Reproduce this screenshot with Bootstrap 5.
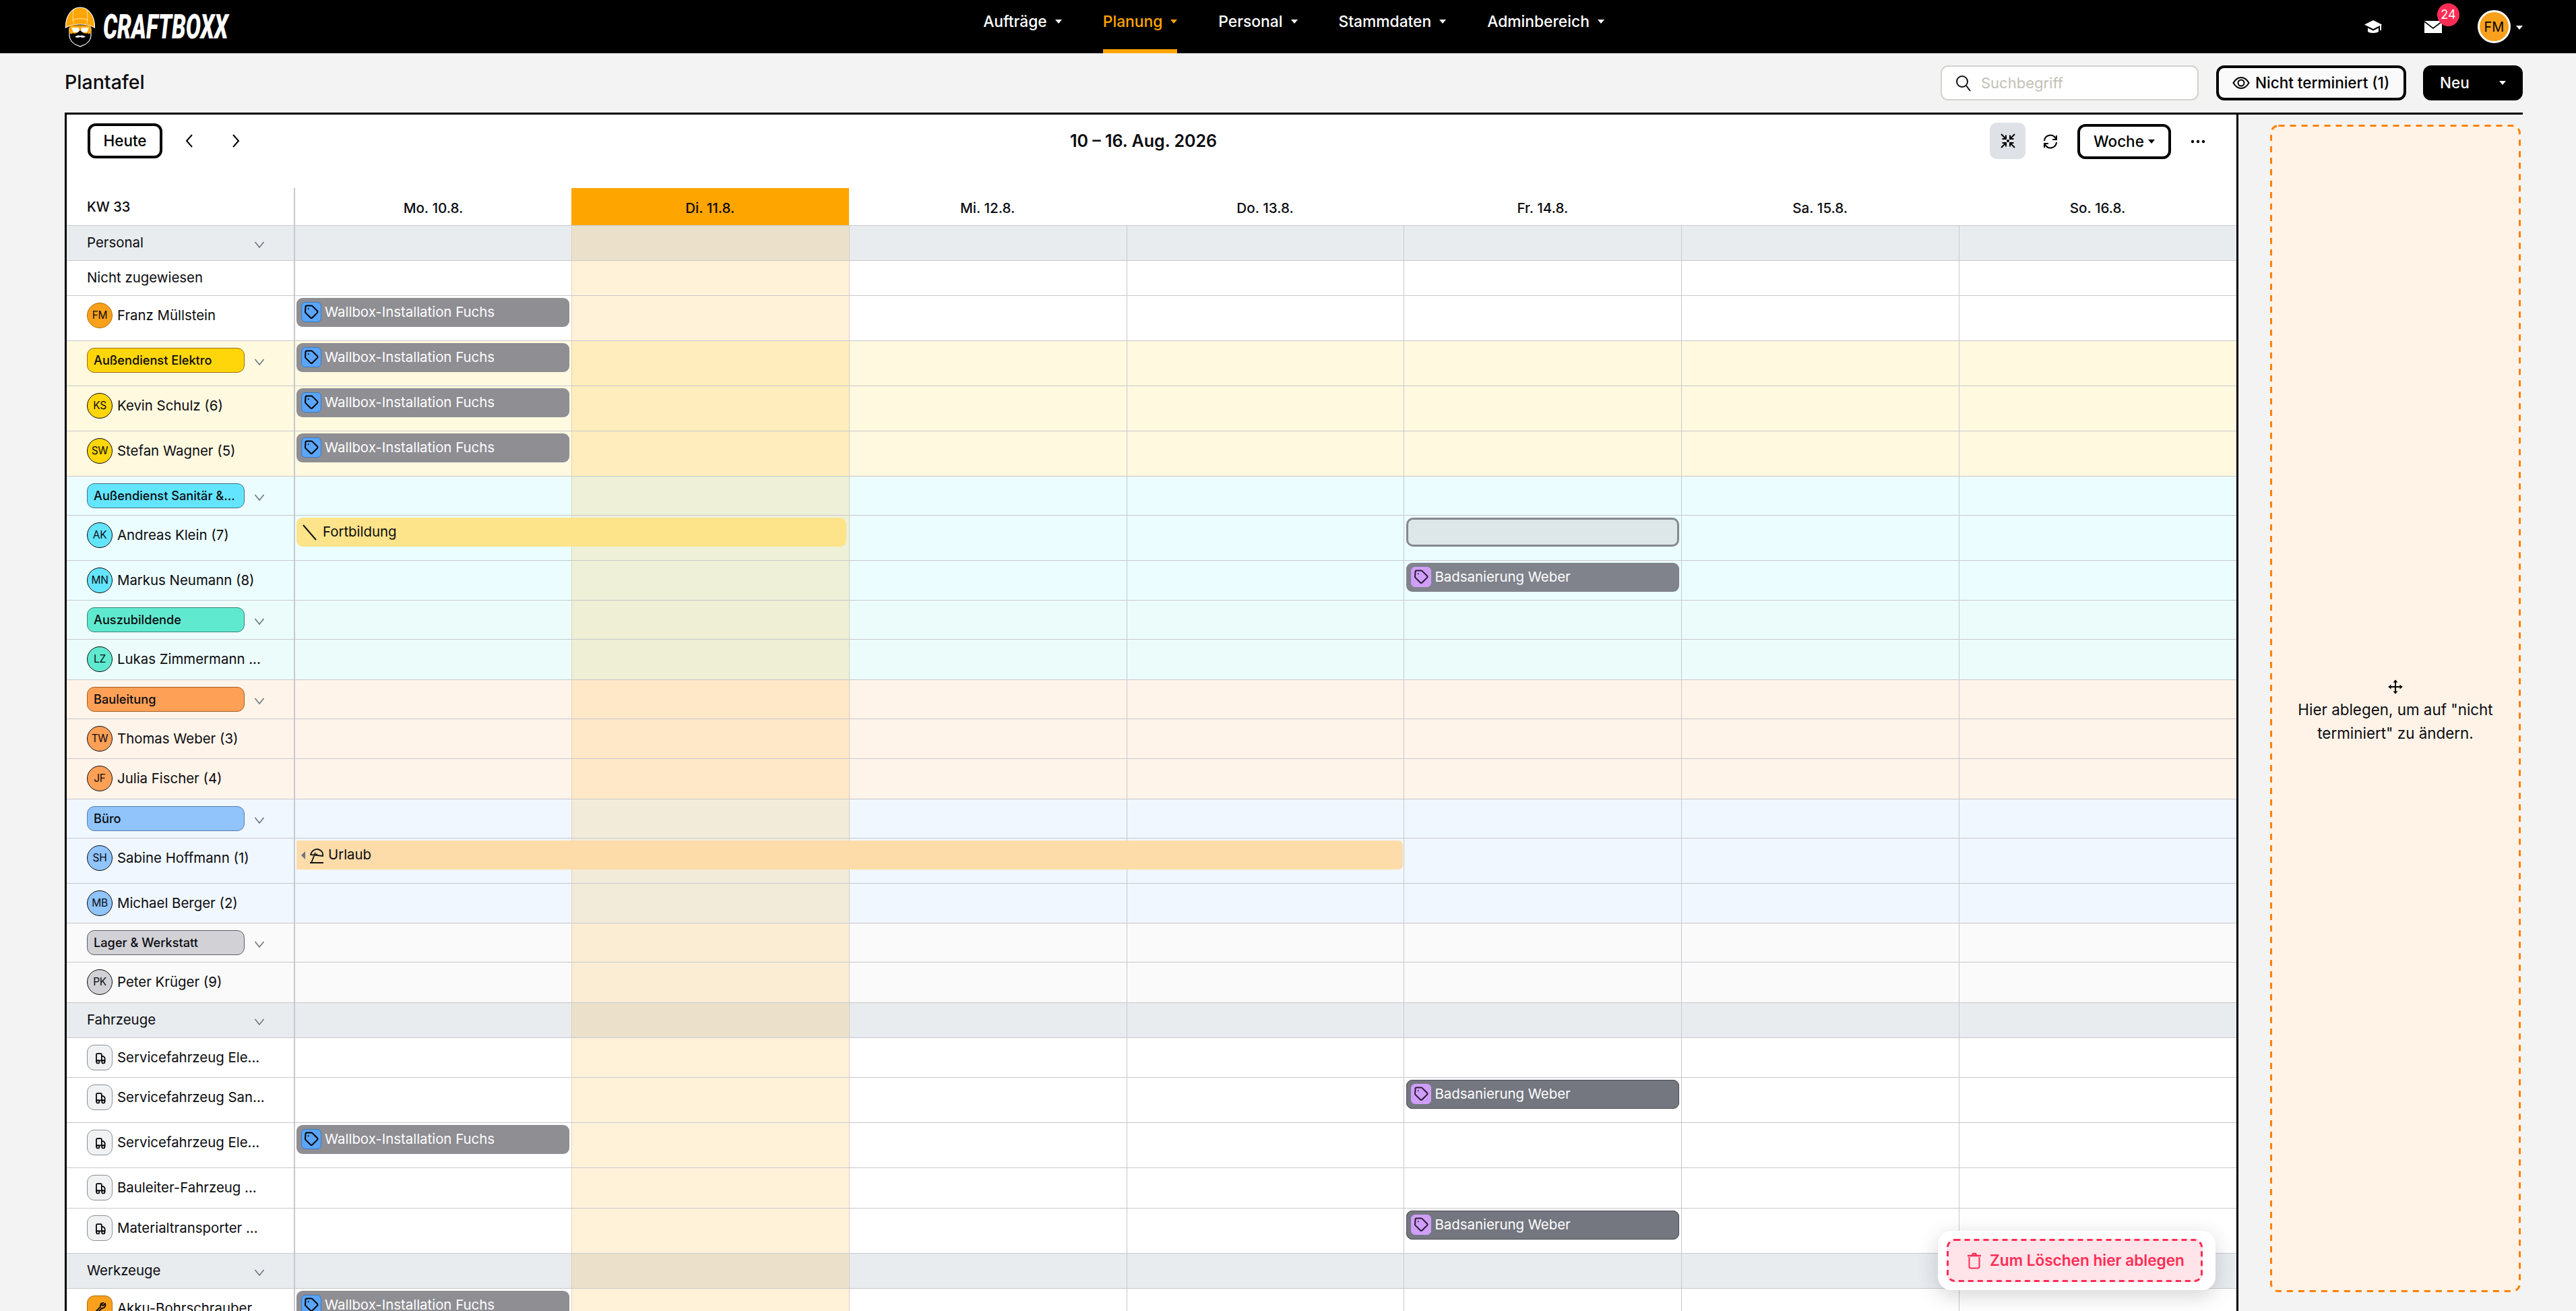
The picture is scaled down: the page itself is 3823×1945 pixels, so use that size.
<!DOCTYPE html>
<html lang="de">
<head>
<meta charset="utf-8">
<title>Plantafel</title>
<link href="https://cdn.jsdelivr.net/npm/bootstrap@5.3.0/dist/css/bootstrap.min.css" rel="stylesheet">
<style>
html,body{height:1945px;overflow:hidden}
body{background:#f3f3f3;font-family:Inter,"Noto Sans",sans-serif;color:#0b0b0f;font-size:20.4px}
.top-nav{height:79px;background:#000;padding:0 79px 0 96px}
.brand-side,.user-side{flex:1 1 0}
.brand-link{gap:11px;text-decoration:none}
.brand-word{display:inline-block;width:185px;color:#fff;font:italic 900 50px/1 Roboto,sans-serif;transform:scaleX(.662);transform-origin:left center;white-space:nowrap;letter-spacing:0}
.main-links{gap:61px;height:79px}
.main-links .nav-link{height:79px;padding:0 0 9px;display:flex;align-items:center;color:#fff;font-size:22.8px;font-weight:500;border-bottom:6px solid transparent}
.main-links .nav-link.is-on{color:#ffa502;border-bottom-color:#ffa502}
.dropdown-toggle::after{margin-left:12px;border-top-width:.3em;border-left-width:.25em;border-right-width:.25em}
.user-side{position:relative}
.mail-wrap{position:relative;width:28px;margin-left:61px;margin-right:52px}
.mail-count{position:absolute;left:20px;top:-24px;width:33px;height:34px;border-radius:50%;background:#ff2d55;color:#fff;font-size:18px;display:flex;align-items:center;justify-content:center}
.me-dot{width:49px;height:49px;border-radius:50%;background:#f9a01c;border:3px solid #fff;color:#000;font-size:20px;display:flex;align-items:center;justify-content:center}
.me-caret{color:#fff;margin-left:8px;font-size:20px}
.me-caret::after{margin-left:0;vertical-align:middle}
.title-bar{height:88px;padding:18px 79px 0 96px}
.title-bar h1{font-size:28.5px;font-weight:500;margin:0;color:#0b0b0f}
.find-box{width:383px;height:52px;background:#fff;border:2px solid #d4d2cf;border-radius:11px;padding-left:20px;gap:14px;color:#c4bfb6}
.find-box input{border:0;outline:0;background:transparent;width:300px;font-size:22px;padding:0}
.find-box input::placeholder{color:#c4bfb6;opacity:1}
.line-btn{height:52px;border:4px solid #000;border-radius:12px;background:#fff;color:#000;font-size:22.5px;font-weight:500;padding:0 20px;display:inline-flex;align-items:center;--bs-btn-hover-bg:#fff}
.line-btn.plain-on{background:#fafafa;width:282px;margin-left:26px;gap:8px;padding:0 0 0 20px;white-space:nowrap}
.solid-btn{width:148px;height:52px;margin-left:25px;border-radius:12px;background:#000;color:#fff;border:0;font-size:22.5px;font-weight:500;padding:0 25px 0 25px;display:flex;align-items:center;justify-content:space-between}
.solid-btn::after{margin-left:0;margin-right:0}
.board{height:1778px;margin:0 79px 0 96px;border-top:3px solid #000;border-left:3px solid #000}
.plan-side{width:3220px;flex:none;background:#fff;overflow:hidden}
.tool-row{height:109px;padding:13px 46px 0 31px;position:relative}
.day-title{position:absolute;left:0;right:24px;top:26px;text-align:center;font-size:25px;font-weight:600;line-height:26px;pointer-events:none}
.tool-btn{width:111px;justify-content:center;padding:0;height:52px}
.nudge{background:none;border:0;padding:0;line-height:0;margin-left:33px;width:14px;height:52px}
.nudge+.nudge{margin-left:55px}
.icon-tog{width:53px;height:54px;background:#dee2e6;border-radius:10px;border:0;padding:0}
.icon-plain{background:none;border:0;padding:0;line-height:0}
.week-btn{width:139px;height:52px;padding:0;justify-content:center}
.week-btn::after{margin-left:6px}
.plan-row{display:grid;grid-template-columns:337px repeat(7,minmax(0,1fr));border-bottom:1px solid #c8c8ce;background:#fff}
.plan-row>*{grid-row:1}
.plan-row>:nth-child(2){grid-column:2}.plan-row>:nth-child(3){grid-column:3}.plan-row>:nth-child(4){grid-column:4}.plan-row>:nth-child(5){grid-column:5}.plan-row>:nth-child(6){grid-column:6}.plan-row>:nth-child(7){grid-column:7}.plan-row>:nth-child(8){grid-column:8}
.plan-row>.at2{grid-column:2}.plan-row>.at2-2{grid-column:2 / span 2}.plan-row>.at2-4{grid-column:2 / span 4}.plan-row>.at6{grid-column:6}
.h52{height:52px}.h56{height:56px}.h58{height:58px}.h59{height:59px}.h60{height:60px}.h67{height:67px}
.plan-head{font-weight:500;font-size:20.6px}
.head-day{display:flex;align-items:center;justify-content:center;padding-top:5px}
.head-day.first{border-left:2px solid #c8c8ce}
.head-day.now{background:#ffa500}
.side-cell{grid-column:1;padding:10px 0 0 30px;display:flex;gap:7px;align-items:flex-start;font-size:20.4px;white-space:nowrap;min-width:0}
.side-cell.mid{align-items:center;padding-top:0}
.plan-head .side-cell{font-size:20px;font-weight:500}
.side-cell .name{line-height:38px}
.grid-cell{border-left:1px solid #c8c8ce}
.grid-cell.first{border-left-width:2px}
.grid-cell.now{background:rgba(255,165,0,.15);border-left-color:rgba(200,190,170,.5)}
.grid-cell.now+.grid-cell{border-left-color:#d4cfc4}
.bg-group{background:#e8ecef}.bg-yellow{background:#fff9e0}.bg-cyan{background:#ebfdfe}.bg-mint{background:#ecfcfa}.bg-orange{background:#fff4ea}.bg-blue{background:#f0f7ff}.bg-grey{background:#fafafa}
.fold{margin-left:auto;margin-right:43px;flex:none}
.fold.tight{margin-left:7px;margin-right:0;margin-top:16px}
.side-cell.mid .fold{margin-top:4px}
.team-pill{width:234px;height:37px;flex:none;border-radius:11px;border:1.5px solid;font-size:18.2px;font-weight:500;line-height:34px;padding-left:9px;overflow:hidden;color:#0b0b0f}
.p-yellow{background:#ffd60a;border-color:#a0690f}.p-cyan{background:#64e5ff;border-color:#3f6f86}.p-mint{background:#5feacf;border-color:#38807a}.p-orange{background:#ffa057;border-color:#a5601f}.p-blue{background:#90c4fb;border-color:#557fae}.p-grey{background:#d1d1d6;border-color:#5d6068}
.face{width:38px;height:38px;border-radius:50%;flex:none;border:1.5px solid;font-size:15.5px;padding:0;display:flex;align-items:center;justify-content:center;letter-spacing:-.3px;line-height:1}
.f-amber{background:#f9a01c;border-color:#b06c05}.f-box{border-radius:11px;background:#f1f2f4;border-color:#8b9097}.f-tool{border-radius:11px;background:#f9a01c;border-color:#b06c05}
.plan-item{align-self:start;height:43px;margin:3px 3px 0 4px;border-radius:9px;display:flex;align-items:center;font-size:20.4px;z-index:1;white-space:nowrap;overflow:hidden}
.it-job{background:#8e8e93;color:#fff;padding-left:7px;gap:5px;font-weight:400}
.it-bad{background:#80828c}
.it-bad.dark{background:#747680;outline:1px solid #4b4d55;outline-offset:-1px}
.it-ghost{background:#dde7e9;border:3px solid #868890;border-radius:10px}
.it-train{background:#fde38a;padding-left:9px;gap:8px;margin-right:4px}
.it-off{background:#fddcaa;border-radius:0 7px 7px 0;padding-left:7px;gap:5px;margin-right:1px}
.tag-box{width:30px;height:30px;border-radius:6px;background:#5aa5f9;border:1px solid #3c7ac0;display:flex;align-items:center;justify-content:center;flex:none;margin-top:-2px}
.it-bad .tag-box{background:#cf9ef9;border-color:#cf9ef9}
.tri-back{width:0;height:0;border-style:solid;border-width:6px 6px 6px 0;border-color:transparent #6d7380 transparent transparent;margin-right:0}
.drop-side{width:422px;flex:none;border-left:3px solid #000;padding:15px 0 0 47px}
.drop-area{position:relative;height:1732px;background:#fff3e8;border-radius:12px;text-align:center;padding:10px 29px 0;font-size:22.4px;line-height:35px}
.dash-frame{position:absolute;inset:0;width:100%;height:100%;pointer-events:none}
.dash-frame rect{x:1.5px;y:1.5px;width:calc(100% - 3px);height:calc(100% - 3px);rx:11px;fill:none;stroke-width:3}
.drop-area .dash-frame rect{stroke:#ff8000;stroke-dasharray:9 8}
.bin-zone .dash-frame rect{stroke:#ff2d55;stroke-dasharray:8 6}
.bin-wrap{position:absolute;left:2876px;top:1826px;width:412px;height:88px;background:#fff;border-radius:20px;box-shadow:0 8px 30px rgba(60,60,70,.22);padding:12px 19px 12px 13px;z-index:5}
.bin-zone{position:relative;height:64px;background:#ffe4ea;border-radius:12px;color:#ff2d55;font-size:22.6px;font-weight:600;gap:12px;white-space:nowrap;padding-left:3px}
</style>
</head>
<body>
<svg width="0" height="0" class="position-absolute">
<symbol id="tagi" viewBox="0 0 24 24"><path d="M3.5 4.5A1.5 1.5 0 0 1 5 3h7.2a2 2 0 0 1 1.4.6l7.2 7.2a2 2 0 0 1 0 2.8l-7.2 7.2a2 2 0 0 1-2.8 0l-7.2-7.2a2 2 0 0 1-.6-1.4z" fill="none" stroke="currentColor" stroke-width="2" transform="translate(0 -.5)"/><circle cx="7.6" cy="7.2" r="1" fill="currentColor"/></symbol>
<symbol id="truck" viewBox="0 0 24 24"><path d="M5 20V6a2 2 0 0 1 2-2h6a2 2 0 0 1 2 2v3h2.5a2 2 0 0 1 1.6.8l1.5 2a2 2 0 0 1 .4 1.2V20" fill="none" stroke="currentColor" stroke-width="2.2"/><path d="M5 17h16M15 9v8" fill="none" stroke="currentColor" stroke-width="2.2"/><circle cx="8" cy="19.5" r="2.6" fill="#fff" stroke="currentColor" stroke-width="2.2"/><circle cx="18" cy="19.5" r="2.6" fill="#fff" stroke="currentColor" stroke-width="2.2"/></symbol>
<symbol id="fold" viewBox="0 0 16 10"><path d="M1.5 1 8 9l6.5-8" fill="none" stroke="#6c757d" stroke-width="1.6"/></symbol>
</svg>

<nav class="navbar navbar-dark top-nav d-flex flex-nowrap align-items-center">
  <div class="brand-side d-flex align-items-center">
    <a class="brand-link d-flex align-items-center" href="#">
      <svg width="46" height="60" viewBox="0 0 46 60"><path d="M7 32v11c0 6 5 11 9 13l7 3 7-3c4-2 9-7 9-13V32z" fill="#000" stroke="#fff" stroke-width="1.2"/><path d="M1.5 31C1 13 11 1 23 1s22 12 21.5 30c-7-4-14-5-21.5-5S8.500 27 1.500 31z" fill="#ffa502" stroke="#fff" stroke-width="1.200"/><path d="M13 5c-1 7-1 13 0 20M33 5c1 7 1 13 0 20M11 20c8-3 16-3 24 0" fill="none" stroke="#fff" stroke-opacity=".7" stroke-width=".9"/><rect x="7" y="28" width="32" height="12" rx="4" fill="#ffa502" stroke="#ffa502"/><path d="M10 31h11l1 4-2 3h-7zM36 31H25l-1 4 2 3h7z" fill="#fff"/><path d="M23 35c-4 4-8 6-12 4 1 6 6 9 12 15 6-6 11-9 12-15-4 2-8 0-12-4z" fill="#000"/><path d="M15 45c3-3 6-3 8-2 2-1 5-1 8 2-3 1-5 1-8 0-3 1-5 1-8 0z" fill="#fff"/></svg>
      <span class="brand-word">CRAFTBOXX</span>
    </a>
  </div>
  <ul class="navbar-nav flex-row main-links">
    <li class="nav-item"><a class="nav-link dropdown-toggle" href="#">Aufträge</a></li>
    <li class="nav-item"><a class="nav-link dropdown-toggle is-on" href="#">Planung</a></li>
    <li class="nav-item"><a class="nav-link dropdown-toggle" href="#">Personal</a></li>
    <li class="nav-item"><a class="nav-link dropdown-toggle" href="#">Stammdaten</a></li>
    <li class="nav-item"><a class="nav-link dropdown-toggle" href="#">Adminbereich</a></li>
  </ul>
  <div class="user-side d-flex align-items-center justify-content-end">
    <svg width="28" height="22" viewBox="0 0 28 22"><path d="M14 1 1 7.500l13 6.500 10-5v7h2V8.500l1-1z" fill="#fff"/><path d="M6 12.500V18c2.500 2.500 13 2.500 16 0v-5.500l-8 4z" fill="#fff"/></svg>
    <div class="mail-wrap"><svg width="28" height="22" viewBox="0 0 28 22" class="d-block"><path d="M1 2h26v18H1z" fill="#fff"/><path d="m1 3 13 10L27 3" fill="none" stroke="#000" stroke-width="1.600"/></svg><span class="mail-count">24</span></div>
    <span class="me-dot">FM</span>
    <span class="dropdown-toggle me-caret"></span>
  </div>
</nav>

<div class="title-bar d-flex align-items-start">
  <h1 class="lh-base me-auto mt-1">Plantafel</h1>
  <label class="find-box d-flex align-items-center mb-0">
    <svg width="24" height="26" viewBox="0 0 24 26"><circle cx="10" cy="11" r="8" fill="none" stroke="#111" stroke-width="2"/><path d="m16 17 6 8" stroke="#111" stroke-width="2"/></svg>
    <input type="text" placeholder="Suchbegriff">
  </label>
  <button class="btn line-btn plain-on" type="button"><svg width="26" height="22" viewBox="0 0 26 22"><path d="M1.500 11C5 5 9 3 13 3s8 2 11.500 8C21 17 17 19 13 19S5 17 1.500 11z" fill="none" stroke="#000" stroke-width="2"/><circle cx="13" cy="11" r="4.500" fill="none" stroke="#000" stroke-width="2"/></svg>Nicht terminiert (1)</button>
  <button class="btn solid-btn dropdown-toggle" type="button">Neu</button>
</div>

<div class="board d-flex">
  <section class="plan-side">
    <div class="tool-row d-flex align-items-start">
      <button class="btn line-btn tool-btn" type="button">Heute</button>
      <button class="nudge" type="button"><svg width="14" height="22" viewBox="0 0 14 22"><path d="M11 2 3 11l8 9" fill="none" stroke="#000" stroke-width="2"/></svg></button>
      <button class="nudge" type="button"><svg width="14" height="22" viewBox="0 0 14 22"><path d="m3 2 8 9-8 9" fill="none" stroke="#000" stroke-width="2"/></svg></button>
      <div class="day-title">10 – 16. Aug. 2026</div>
      <div class="ms-auto d-flex align-items-center">
        <button class="icon-tog d-flex align-items-center justify-content-center" type="button" style="margin-top:-1px"><svg width="24" height="24" viewBox="0 0 24 24"><path d="m2 2 7 7M9 3.500V9H3.500M22 2l-7 7M15 3.500V9h5.500M2 22l7-7M9 20.500V15H3.500M22 22l-7-7M15 20.500V15h5.500" fill="none" stroke="#000" stroke-width="2"/><circle cx="12" cy="12" r="2" fill="#000"/></svg></button>
        <button class="icon-plain ms-4" type="button"><svg width="26" height="26" viewBox="0 0 26 26"><path d="M4 12a9 9 0 0 1 16-5l2 3M22 14a9 9 0 0 1-16 5l-2-3" fill="none" stroke="#000" stroke-width="2"/><path d="M22 4v6h-6M4 22v-6h6" fill="none" stroke="#000" stroke-width="2"/></svg></button>
        <button class="btn line-btn week-btn dropdown-toggle" type="button" style="margin-left:27px">Woche</button>
        <button class="icon-plain" type="button" style="margin-left:29px"><svg width="22" height="6" viewBox="0 0 22 6"><circle cx="3" cy="3" r="2.200"/><circle cx="11" cy="3" r="2.200"/><circle cx="19" cy="3" r="2.200"/></svg></button>
      </div>
    </div>

    <div class="plan-row plan-head h56"><div class="side-cell mid">KW 33</div><div class="head-day first">Mo. 10.8.</div><div class="head-day now">Di. 11.8.</div><div class="head-day">Mi. 12.8.</div><div class="head-day">Do. 13.8.</div><div class="head-day">Fr. 14.8.</div><div class="head-day">Sa. 15.8.</div><div class="head-day">So. 16.8.</div></div>

    <div class="plan-row h52 bg-group"><div class="side-cell mid">Personal<svg class="fold" width="16" height="10"><use href="#fold"/></svg></div><div class="grid-cell first"></div><div class="grid-cell now"></div><div class="grid-cell"></div><div class="grid-cell"></div><div class="grid-cell"></div><div class="grid-cell"></div><div class="grid-cell"></div></div>
    <div class="plan-row h52"><div class="side-cell mid">Nicht zugewiesen</div><div class="grid-cell first"></div><div class="grid-cell now"></div><div class="grid-cell"></div><div class="grid-cell"></div><div class="grid-cell"></div><div class="grid-cell"></div><div class="grid-cell"></div></div>
    <div class="plan-row h67"><div class="side-cell"><span class="face f-amber">FM</span><span class="name">Franz Müllstein</span></div><div class="grid-cell first"></div><div class="grid-cell now"></div><div class="grid-cell"></div><div class="grid-cell"></div><div class="grid-cell"></div><div class="grid-cell"></div><div class="grid-cell"></div><div class="plan-item it-job at2"><span class="tag-box"><svg width="24" height="24" color="#000"><use href="#tagi"/></svg></span>Wallbox-Installation Fuchs</div></div>

    <div class="plan-row h67 bg-yellow"><div class="side-cell"><span class="team-pill p-yellow">Außendienst Elektro</span><svg class="fold tight" width="16" height="10"><use href="#fold"/></svg></div><div class="grid-cell first"></div><div class="grid-cell now"></div><div class="grid-cell"></div><div class="grid-cell"></div><div class="grid-cell"></div><div class="grid-cell"></div><div class="grid-cell"></div><div class="plan-item it-job at2"><span class="tag-box"><svg width="24" height="24" color="#000"><use href="#tagi"/></svg></span>Wallbox-Installation Fuchs</div></div>
    <div class="plan-row h67 bg-yellow"><div class="side-cell"><span class="face p-yellow">KS</span><span class="name">Kevin Schulz (6)</span></div><div class="grid-cell first"></div><div class="grid-cell now"></div><div class="grid-cell"></div><div class="grid-cell"></div><div class="grid-cell"></div><div class="grid-cell"></div><div class="grid-cell"></div><div class="plan-item it-job at2"><span class="tag-box"><svg width="24" height="24" color="#000"><use href="#tagi"/></svg></span>Wallbox-Installation Fuchs</div></div>
    <div class="plan-row h67 bg-yellow"><div class="side-cell"><span class="face p-yellow">SW</span><span class="name">Stefan Wagner (5)</span></div><div class="grid-cell first"></div><div class="grid-cell now"></div><div class="grid-cell"></div><div class="grid-cell"></div><div class="grid-cell"></div><div class="grid-cell"></div><div class="grid-cell"></div><div class="plan-item it-job at2"><span class="tag-box"><svg width="24" height="24" color="#000"><use href="#tagi"/></svg></span>Wallbox-Installation Fuchs</div></div>

    <div class="plan-row h58 bg-cyan"><div class="side-cell"><span class="team-pill p-cyan">Außendienst Sanitär &amp;...</span><svg class="fold tight" width="16" height="10"><use href="#fold"/></svg></div><div class="grid-cell first"></div><div class="grid-cell now"></div><div class="grid-cell"></div><div class="grid-cell"></div><div class="grid-cell"></div><div class="grid-cell"></div><div class="grid-cell"></div></div>
    <div class="plan-row h67 bg-cyan"><div class="side-cell"><span class="face p-cyan">AK</span><span class="name">Andreas Klein (7)</span></div><div class="grid-cell first"></div><div class="grid-cell now"></div><div class="grid-cell"></div><div class="grid-cell"></div><div class="grid-cell"></div><div class="grid-cell"></div><div class="grid-cell"></div><div class="plan-item it-train at2-2"><svg width="22" height="24" viewBox="0 0 22 24"><path d="M1 1l19 22" stroke="#111" stroke-width="2"/></svg>Fortbildung</div><div class="plan-item it-ghost at6"></div></div>
    <div class="plan-row h59 bg-cyan"><div class="side-cell"><span class="face p-cyan">MN</span><span class="name">Markus Neumann (8)</span></div><div class="grid-cell first"></div><div class="grid-cell now"></div><div class="grid-cell"></div><div class="grid-cell"></div><div class="grid-cell"></div><div class="grid-cell"></div><div class="grid-cell"></div><div class="plan-item it-job it-bad at6"><span class="tag-box"><svg width="24" height="24" color="#2a1a33"><use href="#tagi"/></svg></span>Badsanierung Weber</div></div>

    <div class="plan-row h58 bg-mint"><div class="side-cell"><span class="team-pill p-mint">Auszubildende</span><svg class="fold tight" width="16" height="10"><use href="#fold"/></svg></div><div class="grid-cell first"></div><div class="grid-cell now"></div><div class="grid-cell"></div><div class="grid-cell"></div><div class="grid-cell"></div><div class="grid-cell"></div><div class="grid-cell"></div></div>
    <div class="plan-row h60 bg-mint"><div class="side-cell"><span class="face p-mint">LZ</span><span class="name">Lukas Zimmermann ...</span></div><div class="grid-cell first"></div><div class="grid-cell now"></div><div class="grid-cell"></div><div class="grid-cell"></div><div class="grid-cell"></div><div class="grid-cell"></div><div class="grid-cell"></div></div>

    <div class="plan-row h58 bg-orange"><div class="side-cell"><span class="team-pill p-orange">Bauleitung</span><svg class="fold tight" width="16" height="10"><use href="#fold"/></svg></div><div class="grid-cell first"></div><div class="grid-cell now"></div><div class="grid-cell"></div><div class="grid-cell"></div><div class="grid-cell"></div><div class="grid-cell"></div><div class="grid-cell"></div></div>
    <div class="plan-row h59 bg-orange"><div class="side-cell"><span class="face p-orange">TW</span><span class="name">Thomas Weber (3)</span></div><div class="grid-cell first"></div><div class="grid-cell now"></div><div class="grid-cell"></div><div class="grid-cell"></div><div class="grid-cell"></div><div class="grid-cell"></div><div class="grid-cell"></div></div>
    <div class="plan-row h60 bg-orange"><div class="side-cell"><span class="face p-orange">JF</span><span class="name">Julia Fischer (4)</span></div><div class="grid-cell first"></div><div class="grid-cell now"></div><div class="grid-cell"></div><div class="grid-cell"></div><div class="grid-cell"></div><div class="grid-cell"></div><div class="grid-cell"></div></div>

    <div class="plan-row h58 bg-blue"><div class="side-cell"><span class="team-pill p-blue">Büro</span><svg class="fold tight" width="16" height="10"><use href="#fold"/></svg></div><div class="grid-cell first"></div><div class="grid-cell now"></div><div class="grid-cell"></div><div class="grid-cell"></div><div class="grid-cell"></div><div class="grid-cell"></div><div class="grid-cell"></div></div>
    <div class="plan-row h67 bg-blue"><div class="side-cell"><span class="face p-blue">SH</span><span class="name">Sabine Hoffmann (1)</span></div><div class="grid-cell first"></div><div class="grid-cell now"></div><div class="grid-cell"></div><div class="grid-cell"></div><div class="grid-cell"></div><div class="grid-cell"></div><div class="grid-cell"></div><div class="plan-item it-off at2-4"><span class="tri-back"></span><svg width="24" height="24" viewBox="0 0 24 24"><path d="M3 11C4 6 9 2 14 3s8 5 7 10zM10 8l-6 15M2 23h20M13 10l-3 2" fill="none" stroke="#111" stroke-width="1.800"/></svg>Urlaub</div></div>
    <div class="plan-row h59 bg-blue"><div class="side-cell"><span class="face p-blue">MB</span><span class="name">Michael Berger (2)</span></div><div class="grid-cell first"></div><div class="grid-cell now"></div><div class="grid-cell"></div><div class="grid-cell"></div><div class="grid-cell"></div><div class="grid-cell"></div><div class="grid-cell"></div></div>

    <div class="plan-row h58 bg-grey"><div class="side-cell"><span class="team-pill p-grey">Lager &amp; Werkstatt</span><svg class="fold tight" width="16" height="10"><use href="#fold"/></svg></div><div class="grid-cell first"></div><div class="grid-cell now"></div><div class="grid-cell"></div><div class="grid-cell"></div><div class="grid-cell"></div><div class="grid-cell"></div><div class="grid-cell"></div></div>
    <div class="plan-row h60 bg-grey"><div class="side-cell"><span class="face p-grey">PK</span><span class="name">Peter Krüger (9)</span></div><div class="grid-cell first"></div><div class="grid-cell now"></div><div class="grid-cell"></div><div class="grid-cell"></div><div class="grid-cell"></div><div class="grid-cell"></div><div class="grid-cell"></div></div>

    <div class="plan-row h52 bg-group"><div class="side-cell mid">Fahrzeuge<svg class="fold" width="16" height="10"><use href="#fold"/></svg></div><div class="grid-cell first"></div><div class="grid-cell now"></div><div class="grid-cell"></div><div class="grid-cell"></div><div class="grid-cell"></div><div class="grid-cell"></div><div class="grid-cell"></div></div>
    <div class="plan-row h59"><div class="side-cell"><span class="face f-box"><svg width="19" height="19" color="#000"><use href="#truck"/></svg></span><span class="name">Servicefahrzeug Ele...</span></div><div class="grid-cell first"></div><div class="grid-cell now"></div><div class="grid-cell"></div><div class="grid-cell"></div><div class="grid-cell"></div><div class="grid-cell"></div><div class="grid-cell"></div></div>
    <div class="plan-row h67"><div class="side-cell"><span class="face f-box"><svg width="19" height="19" color="#000"><use href="#truck"/></svg></span><span class="name">Servicefahrzeug San...</span></div><div class="grid-cell first"></div><div class="grid-cell now"></div><div class="grid-cell"></div><div class="grid-cell"></div><div class="grid-cell"></div><div class="grid-cell"></div><div class="grid-cell"></div><div class="plan-item it-job it-bad dark at6"><span class="tag-box"><svg width="24" height="24" color="#2a1a33"><use href="#tagi"/></svg></span>Badsanierung Weber</div></div>
    <div class="plan-row h67"><div class="side-cell"><span class="face f-box"><svg width="19" height="19" color="#000"><use href="#truck"/></svg></span><span class="name">Servicefahrzeug Ele...</span></div><div class="grid-cell first"></div><div class="grid-cell now"></div><div class="grid-cell"></div><div class="grid-cell"></div><div class="grid-cell"></div><div class="grid-cell"></div><div class="grid-cell"></div><div class="plan-item it-job at2"><span class="tag-box"><svg width="24" height="24" color="#000"><use href="#tagi"/></svg></span>Wallbox-Installation Fuchs</div></div>
    <div class="plan-row h60"><div class="side-cell"><span class="face f-box"><svg width="19" height="19" color="#000"><use href="#truck"/></svg></span><span class="name">Bauleiter-Fahrzeug ...</span></div><div class="grid-cell first"></div><div class="grid-cell now"></div><div class="grid-cell"></div><div class="grid-cell"></div><div class="grid-cell"></div><div class="grid-cell"></div><div class="grid-cell"></div></div>
    <div class="plan-row h67"><div class="side-cell"><span class="face f-box"><svg width="19" height="19" color="#000"><use href="#truck"/></svg></span><span class="name">Materialtransporter ...</span></div><div class="grid-cell first"></div><div class="grid-cell now"></div><div class="grid-cell"></div><div class="grid-cell"></div><div class="grid-cell"></div><div class="grid-cell"></div><div class="grid-cell"></div><div class="plan-item it-job it-bad dark at6"><span class="tag-box"><svg width="24" height="24" color="#2a1a33"><use href="#tagi"/></svg></span>Badsanierung Weber</div></div>

    <div class="plan-row h52 bg-group"><div class="side-cell mid">Werkzeuge<svg class="fold" width="16" height="10"><use href="#fold"/></svg></div><div class="grid-cell first"></div><div class="grid-cell now"></div><div class="grid-cell"></div><div class="grid-cell"></div><div class="grid-cell"></div><div class="grid-cell"></div><div class="grid-cell"></div></div>
    <div class="plan-row h67"><div class="side-cell"><span class="face f-tool"><svg width="20" height="20" viewBox="0 0 20 20"><path d="M16 2a5 5 0 0 0-5 6L3 16l2 2 8-8a5 5 0 0 0 5-7l-3 3-2-1-1-2z" fill="none" stroke="#000" stroke-width="1.800"/></svg></span><span class="name">Akku-Bohrschrauber</span></div><div class="grid-cell first"></div><div class="grid-cell now"></div><div class="grid-cell"></div><div class="grid-cell"></div><div class="grid-cell"></div><div class="grid-cell"></div><div class="grid-cell"></div><div class="plan-item it-job at2"><span class="tag-box"><svg width="24" height="24" color="#000"><use href="#tagi"/></svg></span>Wallbox-Installation Fuchs</div></div>
  </section>
  <aside class="drop-side">
    <div class="drop-area d-flex flex-column align-items-center justify-content-center">
      <svg class="dash-frame"><rect/></svg>
      <svg width="24" height="24" viewBox="0 0 24 24" class="mb-1"><path d="M12 2v20M2 12h20" stroke="#000" stroke-width="2"/><path d="m8.500 5.500 3.500-4 3.500 4zM8.500 18.500l3.500 4 3.500-4zM5.500 8.500l-4 3.500 4 3.500zM18.500 8.500l4 3.500-4 3.500z" fill="#000"/></svg>
      <div>Hier ablegen, um auf "nicht terminiert" zu ändern.</div>
    </div>
  </aside>
</div>

<div class="bin-wrap">
  <div class="bin-zone d-flex align-items-center justify-content-center">
    <svg class="dash-frame"><rect/></svg>
    <svg width="22" height="26" viewBox="0 0 22 26"><path d="M1 6h20M8 6l1-3h4l1 3" fill="none" stroke="#ff2d55" stroke-width="2.400"/><path d="M3.500 8v14a2.500 2.500 0 0 0 2.500 2.500h10a2.500 2.500 0 0 0 2.500-2.500V8" fill="none" stroke="#ff2d55" stroke-width="2"/></svg>
    <span>Zum Löschen hier ablegen</span>
  </div>
</div>
<script src="https://cdn.jsdelivr.net/npm/bootstrap@5.3.0/dist/js/bootstrap.bundle.min.js"></script>
</body>
</html>
